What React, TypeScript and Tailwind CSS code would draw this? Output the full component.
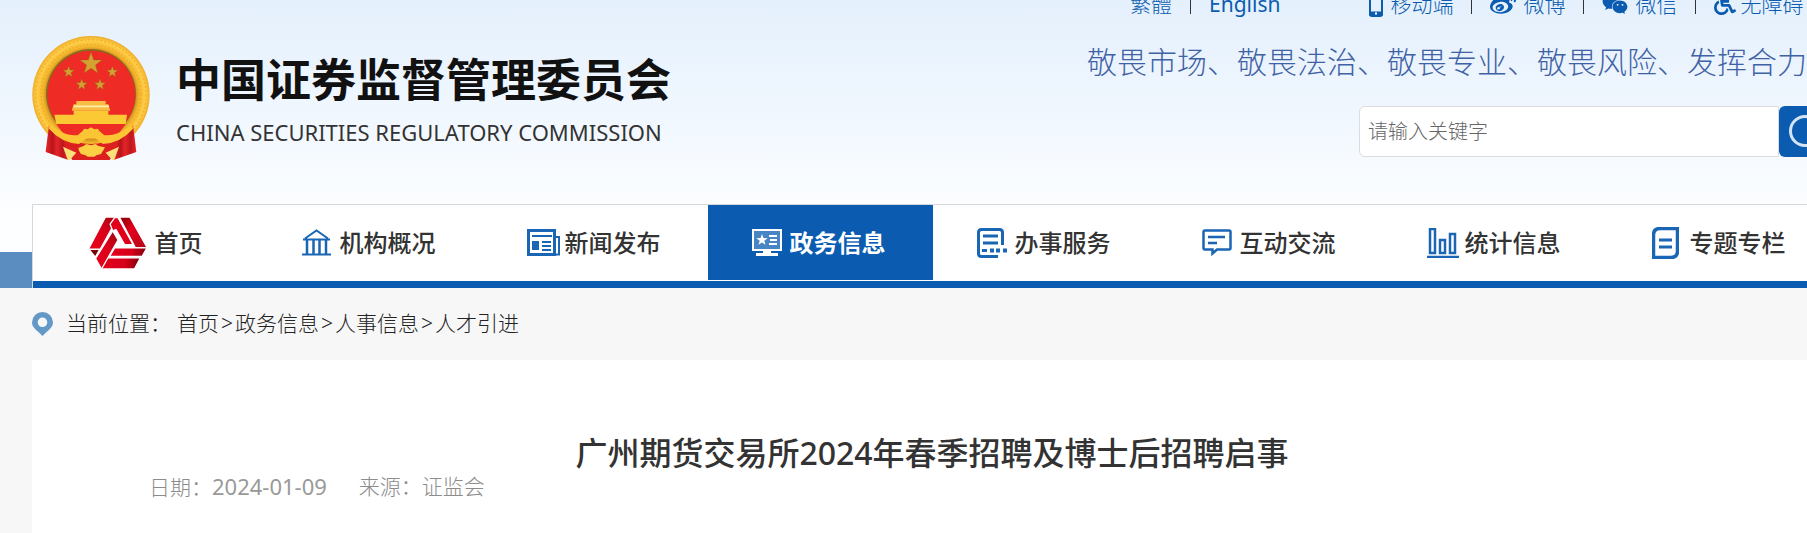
import type { ReactNode } from "react";
import { FaWeibo, FaWeixin, FaWheelchair } from "react-icons/fa";

const star = (cx: number, cy: number, r: number) =>
  Array.from({ length: 10 }, (_, i) => {
    const a = (Math.PI / 5) * i - Math.PI / 2;
    const d = i % 2 ? r * 0.4 : r;
    return `${cx + d * Math.cos(a)},${cy + d * Math.sin(a)}`;
  }).join(" ");

const Emblem = () => (
  <svg viewBox="97 48 354 372" className="h-[124px] w-[118px] shrink-0" aria-hidden="true">
    <defs>
      <radialGradient id="gold" cx="50%" cy="50%" r="50%">
        <stop offset="76%" stopColor="#d08f1c" />
        <stop offset="82%" stopColor="#f3b52c" />
        <stop offset="93%" stopColor="#ffd04a" />
        <stop offset="100%" stopColor="#eeaa26" />
      </radialGradient>
      <linearGradient id="cloth" x1="0" y1="0" x2="1" y2="0">
        <stop offset="0" stopColor="#e8262a" />
        <stop offset="0.3" stopColor="#b8151b" />
        <stop offset="0.5" stopColor="#e5252a" />
        <stop offset="0.75" stopColor="#bd171d" />
        <stop offset="1" stopColor="#e8262a" />
      </linearGradient>
    </defs>
    <circle cx="274" cy="224" r="176" fill="url(#gold)" />
    <circle cx="274" cy="224" r="165" fill="none" stroke="#f2b22e" strokeWidth="4" strokeDasharray="7 5" />
    <circle cx="274" cy="224" r="150" fill="none" stroke="#eba827" strokeWidth="4" strokeDasharray="4 7" />
    <circle cx="274" cy="222" r="135" fill="#8a6a20" />
    <circle cx="275" cy="224" r="132" fill="#ee2b24" />
    <g fill="#d3a032" stroke="#8f5a14" strokeWidth="1">
      <polygon points={star(274, 131, 35)} />
      <polygon points={star(207, 156, 18)} />
      <polygon points={star(338, 156, 18)} />
      <polygon points={star(246, 194, 18)} />
      <polygon points={star(301, 194, 18)} />
    </g>
    <path d="M230 243h88v10h8l6 19H216l6-19h8z" fill="#f9bd45" />
    <path d="M222 259h106" stroke="#fff0a8" strokeWidth="5" />
    <path d="M222 272h104v12h56l-4 28H170l-6-28h58z" fill="#fbc934" />
    <path d="M170 313h208l-26 34H196z" fill="#ee2b24" />
    <path d="M148 314l58 54v52l-68-24z" fill="url(#cloth)" />
    <path d="M400 314l-58 54v52l68-24z" fill="url(#cloth)" />
    <path d="M190 352q84 40 168 0l-10 40-18 28H218l-18-28z" fill="#dc2020" />
    <path d="M190 380l40 18-20 22h-6zM358 380l-40 18 20 22h6z" fill="#fbe07a" />
    <path
      d="M150 308q32 38 84 38l14-12 6-8 10 2 10-6 10 6 10-2 6 8 14 12q52 0 84-38l2 18q-36 42-90 46l-22-16h-28l-22 16q-54-4-90-46z"
      fill="#fbc534"
    />
    <path d="M236 384l16-6 8-6 14 4 14-4 8 6 20 4-6 10-6 10-14 4-6 4h-20l-6-4-14-4-6-10z" fill="#fcd045" />
  </svg>
);

const HomeMark = () => (
  <svg viewBox="10 12 176 158" className="h-[52px] w-[58px] shrink-0" aria-hidden="true">
    <defs>
      <linearGradient id="redUp" x1="0" y1="1" x2="1" y2="0">
        <stop offset="0" stopColor="#e60019" />
        <stop offset="0.55" stopColor="#dd001a" />
        <stop offset="1" stopColor="#96060f" />
      </linearGradient>
      <linearGradient id="redDown" x1="0" y1="0" x2="1" y2="1">
        <stop offset="0" stopColor="#7c0008" />
        <stop offset="0.4" stopColor="#e3001b" />
        <stop offset="1" stopColor="#b00a17" />
      </linearGradient>
      <linearGradient id="redFlat" x1="0" y1="0" x2="1" y2="0">
        <stop offset="0" stopColor="#e3001b" />
        <stop offset="0.6" stopColor="#d8001a" />
        <stop offset="1" stopColor="#7c0008" />
      </linearGradient>
    </defs>
    <g stroke="#fff" strokeWidth="4" strokeLinejoin="round">
      <path d="M8 108h36l-15 26z" fill="#7c0008" />
      <path d="M60 12h38L44 110H8z" fill="url(#redUp)" />
      <path d="M74 34l14-20h10l46 82h-26L92 50 82 54z" fill="#e0001a" />
      <path d="M102 12h32l54 96h-36z" fill="url(#redDown)" />
      <path d="M152 106h36l-15 26h-30z" fill="#7c0008" />
      <path d="M48 136h118l-18 34H46z" fill="url(#redFlat)" />
      <path d="M88 106h98l-15 26H72z" fill="url(#redFlat)" />
      <path d="M82 54l16 28-50 88-18-32z" fill="url(#redUp)" />
    </g>
  </svg>
);

type LineIconProps = { width: number; height: number; children: ReactNode };

const LineIcon = ({ width, height, children }: LineIconProps) => (
  <svg
    width={width}
    height={height}
    viewBox={`0 0 ${width} ${height}`}
    fill="none"
    stroke="currentColor"
    strokeWidth="2"
    aria-hidden="true"
  >
    {children}
  </svg>
);

const navItems = [
  {
    label: "机构概况",
    icon: (
      <LineIcon width={29} height={27}>
        <path d="M0 25.500h29M1 10.500h27M3 9.500L14.500 1.500 26 9.500" />
        <path d="M5 11v15M11.500 11v15M17.500 11v15M24 11v15" strokeWidth="2.5" />
      </LineIcon>
    ),
  },
  {
    label: "新闻发布",
    icon: (
      <LineIcon width={33} height={27}>
        <path d="M1.500 1.500h26v24h-26z" strokeWidth="3" />
        <path d="M28 8h4v17.500h-4M5 7h20M15 13h9M15 17h9M15 21h9" />
        <rect x="5" y="12" width="7" height="9" fill="currentColor" stroke="none" />
      </LineIcon>
    ),
  },
  {
    label: "政务信息",
    active: true,
    icon: (
      <LineIcon width={30} height={27}>
        <rect x="1" y="1" width="28" height="20" fill="#ffffff" fillOpacity="0.25" />
        <path d="M17 7h8M18 11h7M17 15h8" />
        <path d="M11 21h8v3h7v3H4v-3h7z" fill="currentColor" stroke="none" />
        <polygon points={star(10, 11, 6)} fill="currentColor" stroke="none" />
      </LineIcon>
    ),
  },
  {
    label: "办事服务",
    icon: (
      <LineIcon width={30} height={30}>
        <path d="M25.500 17V4.500q0-3-3-3h-18q-3 0-3 3v21q0 3 3 3H21" strokeWidth="3" />
        <path d="M6 8h15M6 15h15M5 22.500h5" strokeWidth="3" />
        <path d="M13 22.500h4M19 22.500h4M26 22.500h4" strokeWidth="4" />
      </LineIcon>
    ),
  },
  {
    label: "互动交流",
    icon: (
      <LineIcon width={30} height={27}>
        <path
          d="M3 1.500h24q1.500 0 1.500 1.500v16q0 1.500-1.500 1.500H15l-4.500 4v-4H3q-1.500 0-1.500-1.500V3q0-1.500 1.500-1.500z"
          strokeWidth="2.5"
        />
        <path d="M6 8h17M6 14h9" strokeWidth="2.5" />
      </LineIcon>
    ),
  },
  {
    label: "统计信息",
    icon: (
      <LineIcon width={32} height={30}>
        <path d="M0 29h32M3 1h5v24H3zM13 12h5v13h-5zM23 6h5v19h-5z" strokeWidth="2.5" />
      </LineIcon>
    ),
  },
  {
    label: "专题专栏",
    icon: (
      <LineIcon width={27} height={32}>
        <path d="M8 1.500h17.500V24q0 6.500-6.500 6.500H1.500V8q0-6.500 6.500-6.500z" strokeWidth="3.5" />
        <path d="M7 13h13M7 20h13" strokeWidth="3" />
      </LineIcon>
    ),
  },
];

const Divider = () => <span className="h-5 w-px bg-[#333]" />;

const TopLinks = () => (
  <div className="-mt-2 flex h-6 items-center text-[21px] leading-6 font-light text-[#0b5cb0]">
    <div className="flex items-center gap-[18px]">
      <a href="#">繁體</a>
      <Divider />
      <a href="#" className="font-normal">
        English
      </a>
    </div>
    <div className="ml-[89px] flex items-center gap-[18px]">
      <a href="#" className="flex items-center gap-[7px]">
        <svg width="14" height="26" viewBox="0 0 14 26" fill="none" stroke="currentColor" aria-hidden="true">
          <rect x="1" y="1" width="12" height="24" rx="2" strokeWidth="2" />
          <path d="M0 22.500h14" strokeWidth="4" />
          <path d="M6 22.500h2" stroke="#fff" strokeWidth="2" />
        </svg>
        移动端
      </a>
      <Divider />
      <a href="#" className="flex items-center gap-[7px]">
        <FaWeibo className="size-[26px]" />
        微博
      </a>
      <Divider />
      <a href="#" className="flex items-center gap-[7px]">
        <FaWeixin className="size-[26px]" />
        微信
      </a>
      <Divider />
      <a href="#" className="flex items-center gap-1">
        <FaWheelchair className="size-[22px]" />
        无障碍
      </a>
    </div>
  </div>
);

const SearchBox = () => (
  <form className="flex h-[51px] w-[473px]" onSubmit={(e) => e.preventDefault()}>
    <input
      type="text"
      aria-label="请输入关键字"
      placeholder="请输入关键字"
      className="min-w-0 flex-1 rounded-l-md border border-[#dcdcdc] bg-white px-2 text-xl font-light placeholder:text-[#666]"
    />
    <button
      type="submit"
      aria-label="搜索"
      className="flex w-[53px] items-center justify-center rounded-md bg-[#0b5cb0] text-[#d5e4f4]"
    >
      <svg width="36" height="36" viewBox="0 0 36 36" fill="none" stroke="currentColor" strokeWidth="3" aria-hidden="true">
        <circle cx="17" cy="17" r="14.5" />
        <path d="M27 27l8 8" />
      </svg>
    </button>
  </form>
);

const Header = () => (
  <header className="flex h-[204px] w-[1800px] justify-between">
    <div className="flex items-start gap-[26px] pt-9">
      <Emblem />
      <div className="pt-[14px] text-[#111]">
        <div className="text-[45px] leading-[60px] font-bold">中国证券监督管理委员会</div>
        <div className="pt-[6px] text-[22px] leading-8 text-[#333]">CHINA SECURITIES REGULATORY COMMISSION</div>
      </div>
    </div>
    <div className="flex w-[745px] flex-col">
      <div className="pl-[43px]">
        <TopLinks />
      </div>
      <p className="pt-6 text-[30px] leading-[44px] font-light text-[#3f62a5]">
        敬畏市场、敬畏法治、敬畏专业、敬畏风险、发挥合力
      </p>
      <div className="flex justify-end pt-[22px]">
        <SearchBox />
      </div>
    </div>
  </header>
);

const Nav = () => (
  <div className="flex">
    <div className="flex w-8 shrink-0 items-end">
      <div className="h-9 w-full bg-[#5b8dc0]" />
    </div>
    <nav className="flex shrink-0 border-t border-l border-[#d5d8dc] bg-white">
      <ul className="flex border-b-[7px] border-[#0b5cb0] pb-px">
        <li className="w-[225px]">
          <a href="#" className="flex h-[75px] items-center justify-center gap-2">
            <HomeMark />
            <span className="text-2xl font-medium text-[#333]">首页</span>
          </a>
        </li>
        {navItems.map((item) => (
          <li key={item.label} className="w-[225px]">
            <a
              href="#"
              className={`flex h-[75px] items-center justify-center pr-1 ${
                item.active ? "bg-[#0b5cb0] text-white" : "text-[#1a66b5]"
              }`}
            >
              <span className="w-[38px]">{item.icon}</span>
              <span className={`text-2xl ${item.active ? "font-bold" : "font-medium text-[#333]"}`}>{item.label}</span>
            </a>
          </li>
        ))}
      </ul>
    </nav>
  </div>
);

const crumbs = ["首页", "政务信息", "人事信息", "人才引进"];

const Breadcrumb = () => (
  <div className="flex h-[72px] items-center text-[21px] font-light text-[#222]">
    <svg width="21" height="24" viewBox="0 0 21 24" className="mr-[13px]" aria-hidden="true">
      <path
        d="M10.500 0A10.500 10.500 0 0 0 0 10.500C0 16 6 19 10.500 24 15 19 21 16 21 10.500A10.500 10.500 0 0 0 10.500 0zm0 5.500a4.800 4.800 0 1 1 0 9.600 4.800 4.800 0 0 1 0-9.600z"
        fill="#6499c7"
      />
    </svg>
    <span className="mr-[6px]">当前位置：</span>
    {crumbs.map((crumb, i) => (
      <span key={crumb} className="flex">
        {i > 0 && <span className="mx-[2px]">&gt;</span>}
        <a href="#">{crumb}</a>
      </span>
    ))}
  </div>
);

export default function App() {
  return (
    <div className="min-h-screen overflow-hidden bg-[#f7f7f7] font-['Noto_Sans','Noto_Sans_CJK_SC',sans-serif]">
      <div className="bg-linear-to-b from-[#e4f0fc] via-[#f2f8ff] via-45% to-[#fdfeff] to-75%">
        <div className="pl-8">
          <Header />
        </div>
        <Nav />
      </div>
      <div className="pl-8">
        <Breadcrumb />
        <main className="min-h-[173px] w-[1800px] bg-white px-[117px] pt-[70px]">
          <h1 className="text-center text-[32px] leading-[46px] font-medium text-[#333]">
            广州期货交易所2024年春季招聘及博士后招聘启事
          </h1>
          <div className="flex gap-8 text-[21px] leading-5 font-light text-[#8c8c8c]">
            <span>
              日期：<time className="text-[22px] font-normal text-[#999]">2024-01-09</time>
            </span>
            <span>来源：证监会</span>
          </div>
        </main>
      </div>
    </div>
  );
}
